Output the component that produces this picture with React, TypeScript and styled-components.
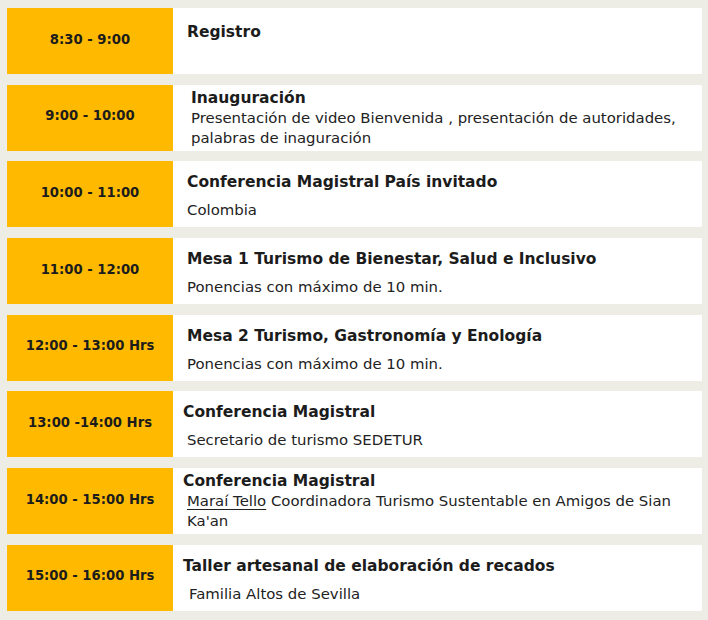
import styled, { createGlobalStyle } from "styled-components";

type Layout = "single" | "tight" | "spaced";

const GlobalStyle = createGlobalStyle`
  html, body {
    margin: 0;
    background: #edece5;
  }
  body {
    font-family: "DejaVu Sans", "Liberation Sans", sans-serif;
    color: #1c1c1c;
  }
`;

const Schedule = styled.div`
  display: flex;
  flex-direction: column;
  gap: 10.7px;
  padding: 8px 6px 9px 7px;
`;

const Row = styled.div`
  display: grid;
  grid-template-columns: 166px 1fr;
  height: 66px;
`;

const Time = styled.div`
  background: #ffba00;
  display: flex;
  align-items: center;
  justify-content: center;
  padding-bottom: 4px;
  font-weight: bold;
  font-size: 13.2px;
  color: #1c1c1c;
`;

const Content = styled.div<{ $layout: Layout; $indent: number }>`
  background: #ffffff;
  display: flex;
  flex-direction: column;
  padding: ${(p) =>
      p.$layout === "single" ? "14px" : p.$layout === "tight" ? "3px" : "11px"}
    12px 0 ${(p) => p.$indent}px;
  gap: ${(p) => (p.$layout === "spaced" ? "8px" : "0")};
`;

const Title = styled.h2`
  margin: 0;
  font-size: 15.5px;
  font-weight: bold;
  line-height: 20px;
  color: #1c1c1c;
`;

const Desc = styled.p<{ $indent: number }>`
  margin: 0;
  padding-left: ${(p) => p.$indent}px;
  font-size: 14.9px;
  line-height: 20px;
  color: #222;
`;

const Link = styled.a`
  color: #222;
  text-decoration: underline;
  text-underline-offset: 3px;
`;

type Item = {
  time: string;
  title: string;
  desc?: React.ReactNode;
  layout: Layout;
  indent: number;
  descIndent?: number;
};

const items: Item[] = [
  { time: "8:30 - 9:00", title: "Registro", layout: "single", indent: 14 },
  {
    time: "9:00 - 10:00",
    title: "Inauguración",
    desc: "Presentación de video Bienvenida , presentación de autoridades, palabras de inaguración",
    layout: "tight",
    indent: 18,
  },
  {
    time: "10:00 - 11:00",
    title: "Conferencia Magistral País invitado",
    desc: "Colombia",
    layout: "spaced",
    indent: 14,
  },
  {
    time: "11:00 - 12:00",
    title: "Mesa 1 Turismo de Bienestar, Salud e Inclusivo",
    desc: "Ponencias con máximo de 10 min.",
    layout: "spaced",
    indent: 14,
  },
  {
    time: "12:00 - 13:00 Hrs",
    title: "Mesa 2 Turismo, Gastronomía y Enología",
    desc: "Ponencias con máximo de 10 min.",
    layout: "spaced",
    indent: 14,
  },
  {
    time: "13:00 -14:00 Hrs",
    title: "Conferencia Magistral",
    desc: "Secretario de turismo SEDETUR",
    layout: "spaced",
    indent: 10,
    descIndent: 4,
  },
  {
    time: "14:00 - 15:00 Hrs",
    title: "Conferencia Magistral",
    desc: (
      <>
        <Link href="#">Maraí Tello</Link> Coordinadora Turismo Sustentable en
        Amigos de Sian Ka'an
      </>
    ),
    layout: "tight",
    indent: 10,
    descIndent: 4,
  },
  {
    time: "15:00 - 16:00 Hrs",
    title: "Taller artesanal de elaboración de recados",
    desc: "Familia Altos de Sevilla",
    layout: "spaced",
    indent: 10,
    descIndent: 6,
  },
];

export default function App() {
  return (
    <>
      <GlobalStyle />
      <Schedule>
        {items.map((item) => (
          <Row key={item.time}>
            <Time>{item.time}</Time>
            <Content $layout={item.layout} $indent={item.indent}>
              <Title>{item.title}</Title>
              {item.desc && (
                <Desc $indent={item.descIndent ?? 0}>{item.desc}</Desc>
              )}
            </Content>
          </Row>
        ))}
      </Schedule>
    </>
  );
}
